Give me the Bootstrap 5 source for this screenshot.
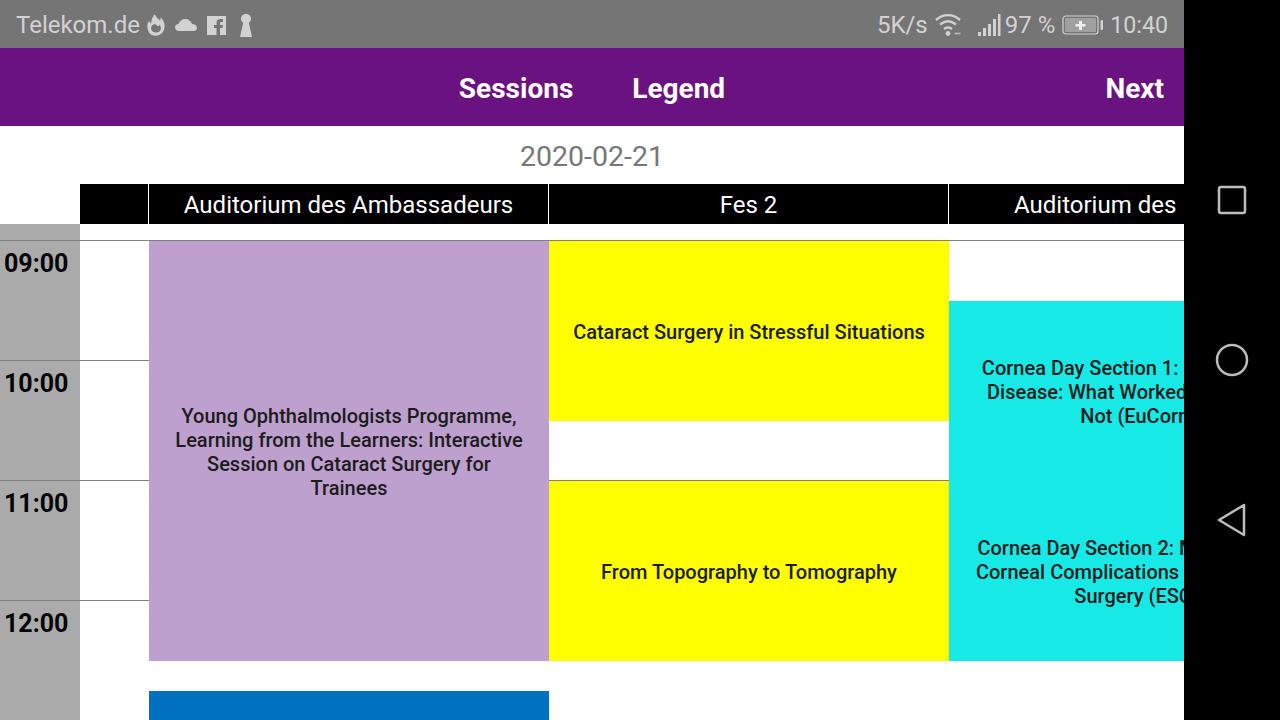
<!DOCTYPE html>
<html lang="en">

<head>
    <meta charset="UTF-8">
    <meta name="viewport" content="width=device-width, initial-scale=1.0">
    <title>Sessions</title>
    <link href="https://cdn.jsdelivr.net/npm/bootstrap@5.3.3/dist/css/bootstrap.min.css" rel="stylesheet">
    <style>
        html, body { height: 720px; overflow: hidden; }
        body { font-family: Roboto, "Liberation Sans", sans-serif; background: #000; }
        .phone-app { width: 1184px; height: 720px; background: #fff; overflow: hidden; }
        .softkeys { width: 96px; height: 720px; background: #000; }
        .softkey { height: 160px; }

        .status-bar { height: 48px; background: #757575; color: #d2d2d2; font-size: 24px; padding: 2px 16px 0; }
        .status-time { font-size: 23.2px; margin-left: 6px; }
        .gap-7 { margin-left: 7px; }
        .gap-10 { margin-left: 10px; }
        .gap-13 { margin-left: 13px; }
        .gap-14 { margin-left: 14px; }
        .app-nav { height: 78px; background: #6a1280; display: grid; grid-template-columns: 1fr auto 1fr; padding: 4px 20px 0; }
        .app-nav a { color: #fff; font-size: 28px; font-weight: 700; text-decoration: none; }
        .app-links { gap: 59px; }
        .day-title { height: 58px; color: #777; font-size: 28.5px; padding-top: 9px; line-height: 44px; margin-bottom: 0; }

        .room-row { height: 40px; margin-left: 80px; background: #000; color: #fff; font-size: 24px; line-height: 42px; white-space: nowrap; }
        .room-spacer { width: 68px; flex: none; }
        .room-cell { width: 400px; flex: none; border-left: 1px solid #fff; text-align: center; }
        .room-cell.cut-off { width: 236px; text-align: left; padding-left: 65px; }
        .time-strip { height: 16px; width: 80px; background: #ababab; }

        .timetable { display: grid; grid-template-columns: 80px 69px 400px 400px 400px; grid-template-rows: repeat(16, 30px); width: 1349px; }
        .hour-row { grid-column: 1 / -1; border-top: 1px solid #808080; }
        .hour-label { width: 80px; height: 100%; background: #ababab; color: #050505; font-size: 25px; font-weight: 700; line-height: 30px; padding: 8px 0 0 4px; }
        .session { z-index: 1; margin-top: 1px; margin-bottom: -1px; padding: 2px 20px 0; color: #1c1c1c; font-size: 20px; font-weight: 500; line-height: 24px; text-align: center; }
        .s-purple { background: #bda0cd; }
        .s-yellow { background: #ff0; }
        .s-cyan { background: #17e9e6; }
        .s-blue { background: #0070c0; }
    </style>
</head>

<body>
    <div class="d-flex">
        <div class="phone-app">
            <div class="status-bar d-flex align-items-center">
                <span>Telekom.de</span>
                <svg class="ms-1" width="24" height="26" viewBox="0 0 22 24" fill="#d2d2d2"><path fill-rule="evenodd" d="M10 2c1 3 3 4 5 6 0-1 0-2 .5-3 2 2 3.500 5 3.500 8 0 5-3.500 9-8.500 9S3 18 3 13c0-2 .5-3 1.500-5 .5 1 1 2 2 2.500C6.500 7 8 4 10 2zM11 11c-3 0-4.500 1.500-4.500 4s2 4 4.500 4 4.500-1.500 4.500-4c0-1.500-.5-2.500-1.500-3.500 0 1-.5 1.500-1 1.500-1 0-1-1-3-2z"/></svg>
                <svg class="gap-7" width="22" height="14" viewBox="0 0 22 14" fill="#d2d2d2"><path d="M4.500 13C2 13 0 11.500 0 9.500 0 7.500 1.500 6 3.500 6 4.500 3 7 1 10.500 1c3 0 5.500 2 6.500 5 2.500 0 5 1.500 5 4 0 2-1.500 3-3.500 3z"/></svg>
                <svg class="gap-10" width="19" height="19" viewBox="0 0 19 19"><path fill="#d2d2d2" d="M0 0h19v19h-6v-7h2.500l.5-3h-3V7.500c0-1 .3-1.500 1.500-1.500H16V3.200C15.400 3.100 14.500 3 13.500 3 11 3 9.500 4.500 9.500 7v2H7v3h2.500v7H0z"/></svg>
                <svg class="gap-13" width="14" height="23" viewBox="0 0 14 23" fill="#d2d2d2"><path d="M7 0c2.800 0 5 2 5 4.700 0 1.800-1 3.300-2.200 4.100L13 23H1L4.200 8.800C3 8 2 6.500 2 4.700 2 2 4.200 0 7 0z"/></svg>
                <span class="ms-auto">5K/s</span>
                <svg class="gap-7" width="28" height="26" viewBox="0 0 28 26" fill="none" stroke="#d2d2d2" stroke-width="2.400"><path d="M1 8c7-6.500 17-6.500 24 0M5 12.500c5-4 11-4 16 0M9 17c3-2.200 5-2.200 8 0"/><circle cx="13" cy="21.500" r="2.400" fill="#d2d2d2" stroke="none"/><path d="M19.500 21.500h6" stroke-width="1.600" stroke="#bdbdbd"/></svg>
                <svg class="gap-14" width="24" height="24" viewBox="0 0 24 24" fill="#d2d2d2"><rect x="1" y="19" width="3" height="4"/><rect x="6" y="15" width="3" height="8"/><rect x="11" y="11" width="3" height="12"/><rect x="16" y="6" width="3" height="17"/><rect x="21" y="1" width="2.500" height="22"/></svg>
                <span class="ms-1">97 %</span>
                <svg class="gap-7" width="42" height="20" viewBox="0 0 42 20"><rect x="1" y="1" width="35" height="18" rx="3" fill="none" stroke="#d2d2d2" stroke-width="1.200"/><rect x="3" y="3" width="31" height="14" rx="1" fill="#a0a0a0"/><path fill="#eee" d="M17 6h3v3h3.500v2.500H20V15h-3v-3.500h-3.500V9H17z"/><rect x="38.500" y="5" width="2.500" height="10" rx="1" fill="#d2d2d2"/></svg>
                <span class="status-time">10:40</span>
            </div>

            <nav class="app-nav align-items-center">
                <span></span>
                <div class="d-flex app-links">
                    <a href="#">Sessions</a>
                    <a href="#">Legend</a>
                </div>
                <a class="text-end" href="#">Next</a>
            </nav>

            <p class="day-title text-center">2020-02-21</p>

            <div class="room-row d-flex overflow-hidden">
                <div class="room-spacer"></div>
                <div class="room-cell">Auditorium des Ambassadeurs</div>
                <div class="room-cell">Fes 2</div>
                <div class="room-cell cut-off">Auditorium des</div>
            </div>
            <div class="time-strip"></div>

            <div class="timetable">
                <div class="hour-row" style="grid-row: 1 / span 4"><div class="hour-label">09:00</div></div>
                <div class="hour-row" style="grid-row: 5 / span 4"><div class="hour-label">10:00</div></div>
                <div class="hour-row" style="grid-row: 9 / span 4"><div class="hour-label">11:00</div></div>
                <div class="hour-row" style="grid-row: 13 / span 4"><div class="hour-label">12:00</div></div>

                <div class="session s-purple d-flex align-items-center justify-content-center" style="grid-column: 3; grid-row: 1 / span 14">Young Ophthalmologists Programme, Learning from the Learners: Interactive Session on Cataract Surgery for Trainees</div>
                <div class="session s-blue" style="grid-column: 3; grid-row: 16 / span 1"></div>

                <div class="session s-yellow d-flex align-items-center justify-content-center" style="grid-column: 4; grid-row: 1 / span 6">Cataract Surgery in Stressful Situations</div>
                <div class="session s-yellow d-flex align-items-center justify-content-center" style="grid-column: 4; grid-row: 9 / span 6">From Topography to Tomography</div>

                <div class="session s-cyan d-flex align-items-center justify-content-center" style="grid-column: 5; grid-row: 3 / span 6">Cornea Day Section 1: Ocular Surface Disease: What Worked and What Did Not (EuCornea)</div>
                <div class="session s-cyan d-flex align-items-center justify-content-center" style="grid-column: 5; grid-row: 9 / span 6">Cornea Day Section 2: Management of Corneal Complications during Cataract Surgery (ESCRS)</div>
            </div>
        </div>

        <div class="softkeys d-flex flex-column justify-content-center align-items-center">
            <div class="softkey d-flex align-items-center">
                <svg width="32" height="32" viewBox="0 0 32 32"><rect x="3" y="3" width="26" height="26" rx="2" fill="none" stroke="#bdbdbd" stroke-width="2.500"/></svg>
            </div>
            <div class="softkey d-flex align-items-center">
                <svg width="36" height="36" viewBox="0 0 36 36"><circle cx="18" cy="18" r="15" fill="none" stroke="#bdbdbd" stroke-width="2.500"/></svg>
            </div>
            <div class="softkey d-flex align-items-center">
                <svg width="32" height="36" viewBox="0 0 32 36"><path d="M28 3v30L3 18z" fill="none" stroke="#bdbdbd" stroke-width="2.500" stroke-linejoin="round"/></svg>
            </div>
        </div>
    </div>
</body>

</html>
